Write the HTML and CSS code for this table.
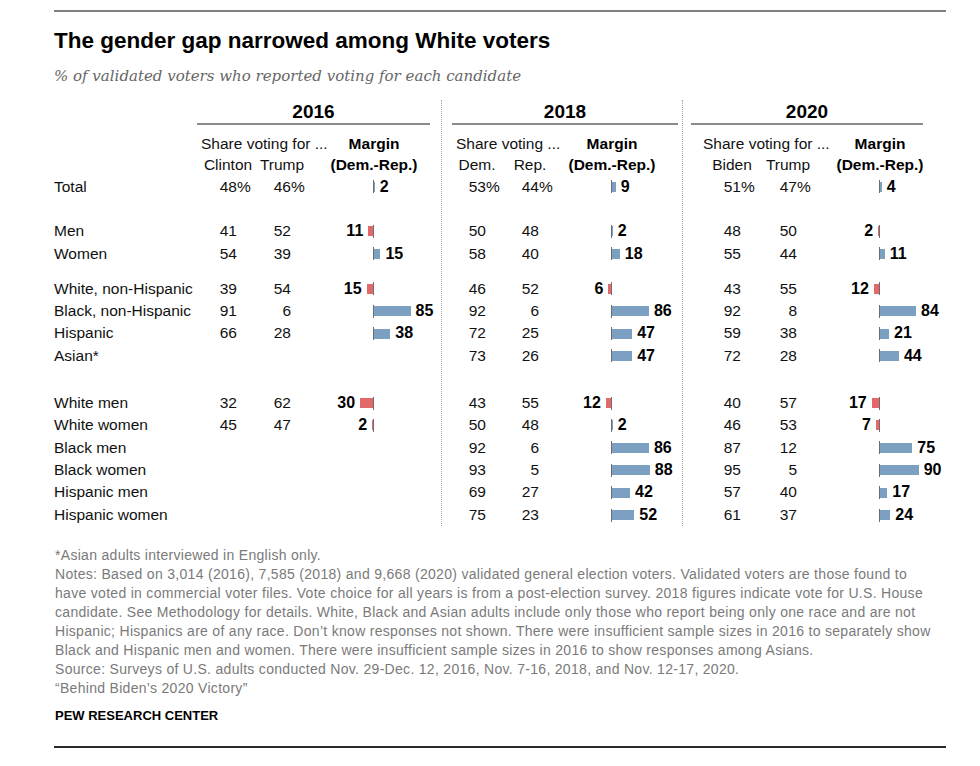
FILE: index.html
```html
<!DOCTYPE html>
<html lang="en">
<head>
<meta charset="utf-8">
<title>The gender gap narrowed among White voters</title>
<link rel="stylesheet" href="styles.css">
</head>
<body>
<div class="figure">
  <div class="rule-top"></div>
  <h1 class="title">The gender gap narrowed among White voters</h1>
  <p class="subtitle">% of validated voters who reported voting for each candidate</p>

  <div class="table">
    <div class="sep sep-1"></div>
    <div class="sep sep-2"></div>

    <div class="label"></div>
    <div class="year">2016</div>
    <div class="year">2018</div>
    <div class="year">2020</div>

    <div class="label"></div>
    <div class="share">Share voting for ...</div><div></div><div class="mhead"><b>Margin</b></div>
    <div class="share">Share voting ...</div><div></div><div class="mhead"><b>Margin</b></div>
    <div class="share share-wide">Share voting for ...</div><div></div><div class="mhead"><b>Margin</b></div>

    <div class="label"></div>
    <div class="cand">Clinton</div><div class="cand">Trump</div><div></div><div class="mhead mhead-sub"><b>(Dem.-Rep.)</b></div>
    <div class="cand">Dem.</div><div class="cand">Rep.</div><div></div><div class="mhead mhead-sub"><b>(Dem.-Rep.)</b></div>
    <div class="cand">Biden</div><div class="cand">Trump</div><div></div><div class="mhead mhead-sub"><b>(Dem.-Rep.)</b></div>

    <!-- Total -->
    <div class="label">Total</div>
    <div class="num">48<span class="pct">%</span></div><div class="num">46<span class="pct">%</span></div>
    <div class="ml"></div><div class="mr axis"><span class="bar pos" style="--v:2"></span><b class="val">2</b></div>
    <div class="num">53<span class="pct">%</span></div><div class="num">44<span class="pct">%</span></div>
    <div class="ml"></div><div class="mr axis"><span class="bar pos" style="--v:9"></span><b class="val">9</b></div>
    <div class="num">51<span class="pct">%</span></div><div class="num">47<span class="pct">%</span></div>
    <div class="ml"></div><div class="mr axis"><span class="bar pos" style="--v:4"></span><b class="val">4</b></div>

    <div class="gap gap-a"></div>

    <!-- Men -->
    <div class="label">Men</div>
    <div class="num">41</div><div class="num">52</div>
    <div class="ml"><b class="val">11</b><span class="bar neg" style="--v:11"></span></div><div class="mr axis"></div>
    <div class="num">50</div><div class="num">48</div>
    <div class="ml"></div><div class="mr axis"><span class="bar pos" style="--v:2"></span><b class="val">2</b></div>
    <div class="num">48</div><div class="num">50</div>
    <div class="ml"><b class="val">2</b><span class="bar neg" style="--v:2"></span></div><div class="mr axis"></div>

    <!-- Women -->
    <div class="label">Women</div>
    <div class="num">54</div><div class="num">39</div>
    <div class="ml"></div><div class="mr axis"><span class="bar pos" style="--v:15"></span><b class="val">15</b></div>
    <div class="num">58</div><div class="num">40</div>
    <div class="ml"></div><div class="mr axis"><span class="bar pos" style="--v:18"></span><b class="val">18</b></div>
    <div class="num">55</div><div class="num">44</div>
    <div class="ml"></div><div class="mr axis"><span class="bar pos" style="--v:11"></span><b class="val">11</b></div>

    <div class="gap gap-b"></div>

    <!-- White, non-Hispanic -->
    <div class="label">White, non-Hispanic</div>
    <div class="num">39</div><div class="num">54</div>
    <div class="ml"><b class="val">15</b><span class="bar neg" style="--v:15"></span></div><div class="mr axis"></div>
    <div class="num">46</div><div class="num">52</div>
    <div class="ml"><b class="val">6</b><span class="bar neg" style="--v:6"></span></div><div class="mr axis"></div>
    <div class="num">43</div><div class="num">55</div>
    <div class="ml"><b class="val">12</b><span class="bar neg" style="--v:12"></span></div><div class="mr axis"></div>

    <!-- Black, non-Hispanic -->
    <div class="label">Black, non-Hispanic</div>
    <div class="num">91</div><div class="num">6</div>
    <div class="ml"></div><div class="mr axis"><span class="bar pos" style="--v:85"></span><b class="val">85</b></div>
    <div class="num">92</div><div class="num">6</div>
    <div class="ml"></div><div class="mr axis"><span class="bar pos" style="--v:86"></span><b class="val">86</b></div>
    <div class="num">92</div><div class="num">8</div>
    <div class="ml"></div><div class="mr axis"><span class="bar pos" style="--v:84"></span><b class="val">84</b></div>

    <!-- Hispanic -->
    <div class="label">Hispanic</div>
    <div class="num">66</div><div class="num">28</div>
    <div class="ml"></div><div class="mr axis"><span class="bar pos" style="--v:38"></span><b class="val">38</b></div>
    <div class="num">72</div><div class="num">25</div>
    <div class="ml"></div><div class="mr axis"><span class="bar pos" style="--v:47"></span><b class="val">47</b></div>
    <div class="num">59</div><div class="num">38</div>
    <div class="ml"></div><div class="mr axis"><span class="bar pos" style="--v:21"></span><b class="val">21</b></div>

    <!-- Asian -->
    <div class="label">Asian*</div>
    <div class="num"></div><div class="num"></div>
    <div class="ml"></div><div class="mr"></div>
    <div class="num">73</div><div class="num">26</div>
    <div class="ml"></div><div class="mr axis"><span class="bar pos" style="--v:47"></span><b class="val">47</b></div>
    <div class="num">72</div><div class="num">28</div>
    <div class="ml"></div><div class="mr axis"><span class="bar pos" style="--v:44"></span><b class="val">44</b></div>

    <div class="gap gap-c"></div>

    <!-- White men -->
    <div class="label">White men</div>
    <div class="num">32</div><div class="num">62</div>
    <div class="ml"><b class="val">30</b><span class="bar neg" style="--v:30"></span></div><div class="mr axis"></div>
    <div class="num">43</div><div class="num">55</div>
    <div class="ml"><b class="val">12</b><span class="bar neg" style="--v:12"></span></div><div class="mr axis"></div>
    <div class="num">40</div><div class="num">57</div>
    <div class="ml"><b class="val">17</b><span class="bar neg" style="--v:17"></span></div><div class="mr axis"></div>

    <!-- White women -->
    <div class="label">White women</div>
    <div class="num">45</div><div class="num">47</div>
    <div class="ml"><b class="val">2</b><span class="bar neg" style="--v:2"></span></div><div class="mr axis"></div>
    <div class="num">50</div><div class="num">48</div>
    <div class="ml"></div><div class="mr axis"><span class="bar pos" style="--v:2"></span><b class="val">2</b></div>
    <div class="num">46</div><div class="num">53</div>
    <div class="ml"><b class="val">7</b><span class="bar neg" style="--v:7"></span></div><div class="mr axis"></div>

    <!-- Black men -->
    <div class="label">Black men</div>
    <div class="num"></div><div class="num"></div>
    <div class="ml"></div><div class="mr"></div>
    <div class="num">92</div><div class="num">6</div>
    <div class="ml"></div><div class="mr axis"><span class="bar pos" style="--v:86"></span><b class="val">86</b></div>
    <div class="num">87</div><div class="num">12</div>
    <div class="ml"></div><div class="mr axis"><span class="bar pos" style="--v:75"></span><b class="val">75</b></div>

    <!-- Black women -->
    <div class="label">Black women</div>
    <div class="num"></div><div class="num"></div>
    <div class="ml"></div><div class="mr"></div>
    <div class="num">93</div><div class="num">5</div>
    <div class="ml"></div><div class="mr axis"><span class="bar pos" style="--v:88"></span><b class="val">88</b></div>
    <div class="num">95</div><div class="num">5</div>
    <div class="ml"></div><div class="mr axis"><span class="bar pos" style="--v:90"></span><b class="val">90</b></div>

    <!-- Hispanic men -->
    <div class="label">Hispanic men</div>
    <div class="num"></div><div class="num"></div>
    <div class="ml"></div><div class="mr"></div>
    <div class="num">69</div><div class="num">27</div>
    <div class="ml"></div><div class="mr axis"><span class="bar pos" style="--v:42"></span><b class="val">42</b></div>
    <div class="num">57</div><div class="num">40</div>
    <div class="ml"></div><div class="mr axis"><span class="bar pos" style="--v:17"></span><b class="val">17</b></div>

    <!-- Hispanic women -->
    <div class="label">Hispanic women</div>
    <div class="num"></div><div class="num"></div>
    <div class="ml"></div><div class="mr"></div>
    <div class="num">75</div><div class="num">23</div>
    <div class="ml"></div><div class="mr axis"><span class="bar pos" style="--v:52"></span><b class="val">52</b></div>
    <div class="num">61</div><div class="num">37</div>
    <div class="ml"></div><div class="mr axis"><span class="bar pos" style="--v:24"></span><b class="val">24</b></div>
  </div>

  <p class="notes">*Asian adults interviewed in English only.<br>
Notes: Based on 3,014 (2016), 7,585 (2018) and 9,668 (2020) validated general election voters. Validated voters are those found to<br>
have voted in commercial voter files. Vote choice for all years is from a post-election survey. 2018 figures indicate vote for U.S. House<br>
candidate. See Methodology for details. White, Black and Asian adults include only those who report being only one race and are not<br>
Hispanic; Hispanics are of any race. Don’t know responses not shown. There were insufficient sample sizes in 2016 to separately show<br>
Black and Hispanic men and women. There were insufficient sample sizes in 2016 to show responses among Asians.<br>
Source: Surveys of U.S. adults conducted Nov. 29-Dec. 12, 2016, Nov. 7-16, 2018, and Nov. 12-17, 2020.<br>
“Behind Biden’s 2020 Victory”</p>

  <p class="brand">PEW RESEARCH CENTER</p>
  <div class="rule-bottom"></div>
</div>
</body>
</html>
```

FILE: styles.css
```css
html, body {
  margin: 0;
  padding: 0;
  background: #ffffff;
}

body {
  font-family: "Liberation Sans", Arial, sans-serif;
  color: #111111;
}

.figure {
  width: 892px;
  margin-left: 54px;
  padding-top: 10px;
}

.rule-top {
  height: 2px;
  background: #808080;
}

.title {
  margin: 14.5px 0 0 0;
  font-size: 22.5px;
  line-height: 28px;
  font-weight: 700;
  color: #000000;
}

.subtitle {
  margin: 11.5px 0 0 0;
  font-family: "DejaVu Serif", "Liberation Serif", serif;
  font-style: italic;
  font-size: 15px;
  line-height: 20px;
  color: #666666;
}

/* ---------- table ---------- */
.table {
  margin-top: 14px;
  display: grid;
  grid-template-columns:
    143px
    40px 54px 82px 57px
    22px
    34px 53px 72px 67px
    13px
    50px 56px 82px 44px;
  font-size: 15.5px;
  line-height: 22.4px;
  color: #111111;
}

.sep {
  grid-row: 1 / span 19;
  justify-self: center;
  width: 0;
  border-left: 1px dotted #a8a8a8;
}
.sep-1 { grid-column: 6; }
.sep-2 { grid-column: 11; justify-self: start; margin-left: 4px; }

.label {
  grid-column: 1;
  white-space: nowrap;
}

.year {
  grid-column: span 4;
  text-align: center;
  font-weight: 700;
  font-size: 19px;
  line-height: 23px;
  color: #000000;
  border-bottom: 2px solid #8a8a8a;
  margin-bottom: 9px;
}

.share {
  grid-column: span 2;
  padding-left: 4px;
  white-space: nowrap;
  line-height: 20px;
}
.share-wide { padding-left: 12px; }

.cand {
  justify-self: end;
  width: 18px;
  display: flex;
  justify-content: center;
  white-space: nowrap;
  line-height: 21.5px;
}

.mhead {
  justify-self: start;
  width: 2px;
  display: flex;
  justify-content: center;
  white-space: nowrap;
  line-height: 20px;
  color: #000000;
}
.mhead-sub { line-height: 21.5px; }

.num {
  text-align: right;
  white-space: nowrap;
}
.pct {
  margin-right: -0.889em;
}

.ml {
  display: flex;
  justify-content: flex-end;
  align-items: center;
  gap: 5px;
}

.mr {
  display: flex;
  align-items: center;
}

.mr.axis::before {
  content: "";
  flex: none;
  width: 1px;
  height: 13px;
  background: #6e6e6e;
}

.bar {
  display: block;
  flex: none;
  height: 10px;
  width: calc(var(--v) * 0.43px);
}
.bar.pos { background: #7ba0c1; }
.bar.neg { background: #e2686a; }

.val {
  font-size: 16px;
  font-weight: 700;
  color: #000000;
  white-space: nowrap;
}
.mr .val { margin-left: 5px; }

.gap { grid-column: 1; }
.gap-a { height: 22.3px; }
.gap-b { height: 12.5px; }
.gap-c { height: 24.7px; }

/* ---------- footer ---------- */
.notes {
  margin: 19.7px 0 0 1px;
  font-size: 14px;
  letter-spacing: 0.3px;
  line-height: 19px;
  color: #7a7a7a;
  white-space: nowrap;
}

.brand {
  margin: 9.7px 0 0 1px;
  font-size: 13px;
  line-height: 16px;
  font-weight: 700;
  color: #000000;
}

.rule-bottom {
  margin-top: 22px;
  height: 2px;
  background: #2a2a2a;
}
```
